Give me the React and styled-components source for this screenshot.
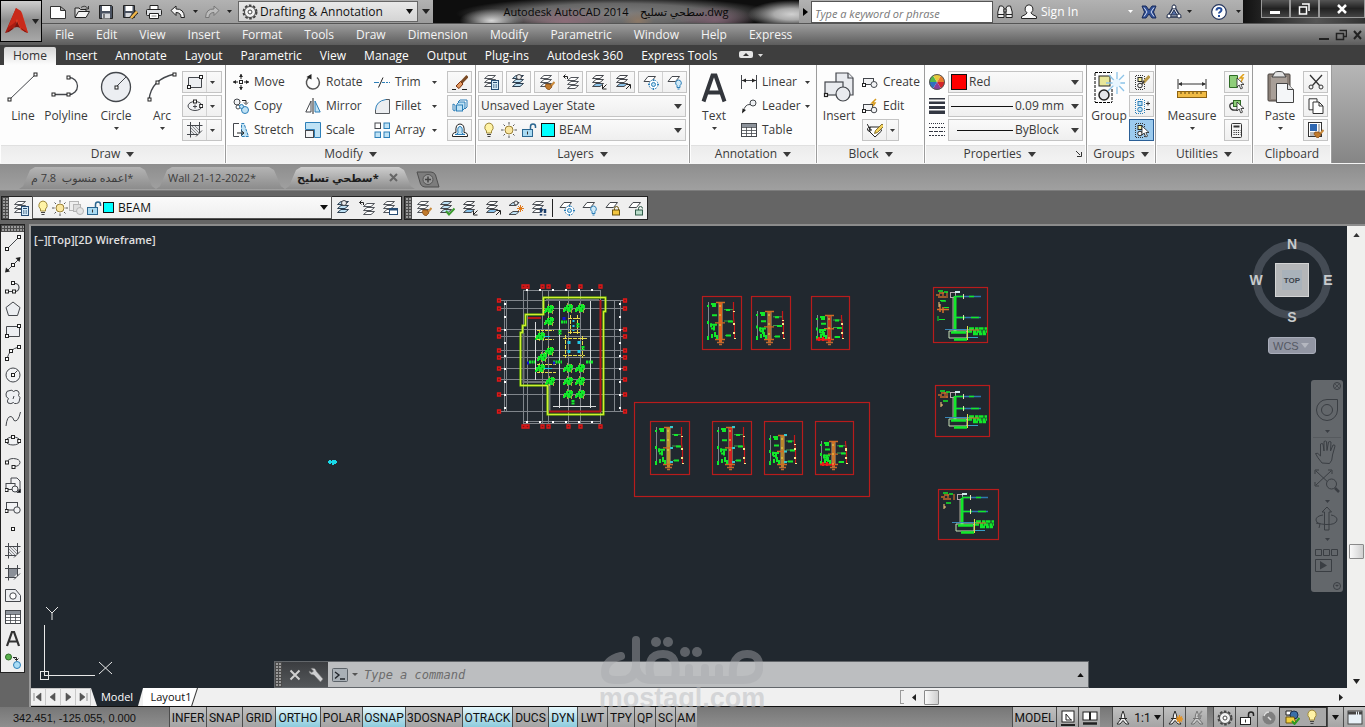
import React, { useState } from 'react';
import styled, { createGlobalStyle } from 'styled-components';

const GlobalStyle = createGlobalStyle`
  * {
    box-sizing: border-box;
  }

  body {
    margin: 0;
    background: #656565;
    font-family: "Open Sans", "Noto Sans", "DejaVu Sans", sans-serif;
    font-size: 12px;
    line-height: 16px;
    color: #3a3a3a;
  }

  button, input, select {
    font: inherit;
    color: inherit;
    margin: 0;
    padding: 0;
    border: 0;
    border-radius: 0;
    background: none;
  }
`;

/* ---------- icons ---------- */

const dark = '#44474c';
const blue = '#2d7fb8';
const pale = '#bfe2f5';

const node = (x, y) => (
  <rect key={ `${x}-${y}` } x={ x - 1.5 } y={ y - 1.5 } width="3" height="3" fill="#fff" stroke="#222" />
);

const sheets = (c = '#50545a', bottom = '#fff', top = '#fff') => (
  <g fill={ top } stroke={ c }>
    <path d="M1.500 12.500L5 9.500H12.500L9 12.500Z" fill={ bottom } />
    <path d="M1.500 8.500L5 5.500H12.500L9 8.500Z" />
    <path d="M1.500 4.500L5 1.500H12.500L9 4.500Z" />
  </g>
);

const sheet = <path d="M1 7.500L5 2.500H12.500L8.500 7.500Z" fill="#fff" stroke={ dark } />;

const bulb = (
  <>
    <path d="M8 1a4.500 4.500 0 0 1 2.500 8v2h-5v-2A4.500 4.500 0 0 1 8 1Z" fill="#fff3a6" stroke="#a08a3c" />
    <path d="M6 12.500h4M6.500 14.500h3" stroke="#444" />
  </>
);

const smallBulb = (
  <>
    <path d="M11.500 6a3 3 0 0 1 1.500 5.500v2h-3v-2A3 3 0 0 1 11.500 6Z" fill="#cfeaf8" stroke={ blue } />
    <path d="M10.500 15h2" stroke={ blue } />
  </>
);

const snow = (
  <g stroke={ blue }>
    <circle cx="10.500" cy="10.500" r="4.500" fill="#fff" strokeDasharray="2 1.500" />
    <circle cx="10.500" cy="10.500" r="2" fill={ pale } />
    <path d="M10.500 5v11M5 10.500h11" strokeDasharray="2 7 2 0" />
  </g>
);

const brush = (
  <>
    <path d="M15.500 8L12 12" stroke="#c98a3c" strokeWidth="2" />
    <path d="M7 10l4 0 2 3-3 3q-3-1-4-4Z" fill="#c07a2c" stroke="#7c4310" strokeWidth=".7" />
  </>
);

const flower = (
  <path
    d="M5 1.500Q7 .5 8.500 2.500Q11 .5 13 2Q15 4 13.500 6.500Q16 8.500 14.500 11Q14.500 14.500 11.500 14.500Q9 15 8.500 13.500Q6 15.500 3 14Q1.500 12 3.500 9.500Q.5 8.500 1 5Q1 1.500 5 1.500ZM9 7L8 10"
    fill="#eef0f3"
    stroke={ dark }
  />
);

const hatch = (
  <>
    <path d="M3 3h10v7l-3 3H3Z" fill="#e6e8ec" />
    <path d="M4 9l3 3M4 6l6 6M5 4l7 7M8 4l4 4" stroke="#777" strokeWidth=".8" />
    <path d="M3.500 0v15.500M12.500 0v11M0 3.500h15.500M0 12.500h11M9 14.500l6-6" stroke={ dark } />
  </>
);

const aMan = (
  <g fill="#f3f3f3" stroke="#2a2a2a">
    <path d="M8 1L9.500 5 10 9 14 14H11L8 10.500 5 14H2L6 9 6.500 5Z" />
    <path d="M4 8.500h8" />
  </g>
);

const openLock = (fill, c) => (
  <>
    <path d="M9.500 8V4.500a2.500 2.500 0 0 1 5 0V6" stroke={ c } strokeWidth="1.500" />
    <rect x="1.500" y="7.500" width="10" height="7" fill={ fill } stroke={ c } />
    <path d="M6.500 9.500v3" stroke="#333" />
  </>
);

const lockOver = (fill, c, open) => (
  <>
    { sheet }
    <path d={ open ? 'M10.500 10V8.500a2 2 0 0 1 4 0' : 'M9.500 10V8.500a2 2 0 0 1 4 0V10' } stroke={ c } />
    <rect x="7.500" y="10" width="7" height="5" fill={ fill } stroke={ c } />
  </>
);

const cursor = <path d="M8 4v9l2.200-2 1.600 4 1.700-.8-1.600-3.700H15Z" fill="#fff" stroke="#222" strokeWidth=".8" />;

const groupMarks = (
  <>
    <path d="M1.500 2v13M10.500 2v13M2 1.500h8M2 15.500h8" stroke="#333" strokeDasharray="1 1" />
    <rect x="4" y="3.500" width="4" height="4" fill="#f5f0a0" stroke="#222" />
    <circle cx="6" cy="11.500" r="2.300" fill="#eee" stroke="#222" />
  </>
);

const glyphs = {
  // quick access
  newFile: <path d="M.5 2.500h10l5 4v8H.5ZM10.500 2.500v4h5" fill="#fff" stroke="#333" />,
  open: (
    <>
      <path d="M1 13V4h4l1.500 1.500H12V7" fill="#ddd" stroke="#222" />
      <path d="M1 13.500L4.500 7.500H15.500L12 13.500Z" fill="#f4f4f4" stroke="#222" />
      <path d="M7 3.500q4-3 7 1M14.500 2v3h-3" stroke="#222" strokeWidth=".8" />
    </>
  ),
  save: (
    <>
      <path d="M1.500 1.500h12l1 1v12h-13Z" fill="#4a5261" stroke="#222" />
      <rect x="4" y="2" width="8" height="5" fill="#fff" />
      <rect x="4" y="9.500" width="8" height="5" fill="#d6d8dc" />
      <path d="M6 10v4" stroke="#222" />
    </>
  ),
  saveAs: (
    <>
      <path d="M1.500 1.500h11v12h-11Z" fill="#4a5261" stroke="#222" />
      <rect x="3.500" y="2" width="7" height="5" fill="#fff" />
      <rect x="3.500" y="9" width="6" height="4" fill="#d6d8dc" />
      <path d="M15 7.500L9 14" stroke="#222" strokeWidth="4" />
      <path d="M15 7.500L9 14" stroke="#f0b64a" strokeWidth="2.500" />
    </>
  ),
  print: (
    <>
      <path d="M4 6V1.500h8V6" fill="#fff" stroke="#222" />
      <rect x=".5" y="5.500" width="15" height="6" rx="1" fill="#dfe1e4" stroke="#222" />
      <path d="M3.500 9.500h9v5h-9Z" fill="#fff" stroke="#222" />
      <path d="M5.500 12h5" stroke="#888" />
    </>
  ),
  undo: <path d="M1 6.500L6 2v3q8-.5 8.500 8.500H11Q11 8.500 6 8.500v3Z" fill="#f4f4f4" stroke="#222" />,
  redo: <path d="M15 6.500L10 2v3q-8-.5-8.500 8.500H5Q5 8.500 10 8.500v3Z" fill="#bcbcbc" stroke="#777" />,
  gear: (
    <>
      <circle cx="8" cy="8" r="6.500" stroke="#444" strokeWidth="2" strokeDasharray="2.600 1.500" />
      <circle cx="8" cy="8" r="5.500" fill="#f2f2f2" stroke="#444" />
      <circle cx="8" cy="8" r="2" fill="#fff" stroke="#444" />
    </>
  ),
  binoculars: (
    <g fill="#eee" stroke="#222">
      <path d="M2.500 2h3l1.500 2v9.500H.8V8ZM13.500 2h-3L9 4v9.500h6.200V8Z" />
      <path d="M7 5h2v3H7ZM1 10.500h6M9 10.500h6" />
    </g>
  ),
  person: (
    <path d="M8 .8a4 4.300 0 0 1 2 8q0 1.500 5.500 3.700v2H.5v-2Q6 10.300 6 8.800a4 4.300 0 0 1 2-8Z" fill="#fbfbfb" stroke="#222" />
  ),
  exchange: (
    <g strokeWidth="1">
      <path d="M1 2h4l3 4 3-4h4l-2.500 6 2.500 6h-4l-3-4-3 4H1l2.500-6Z" fill="#2f4f96" stroke="#1b2c5c" />
      <path d="M3 3.500L6 8 3 12.500M13 3.500L10 8l3 4.500" stroke="#d7def0" />
    </g>
  ),
  triangleA: (
    <>
      <path d="M8 1.500L14.500 13H1.500Z" fill="#dfe4ee" stroke="#26324f" strokeWidth="1.500" />
      <path d="M8 6l3 5H5Z" fill="#5770a8" stroke="#26324f" />
      <g fill="#fff" stroke="#26324f">
        <circle cx="8" cy="3" r="2" /><circle cx="3" cy="12" r="2" /><circle cx="13" cy="12" r="2" />
      </g>
    </>
  ),
  help: (
    <>
      <circle cx="8" cy="8" r="7.300" fill="#fff" stroke="#24345c" strokeWidth="1.200" />
      <path d="M5.500 6.500q0-2.500 2.500-2.500t2.500 2q0 1.200-1.500 2-1 .6-1 1.500M8 11v2" stroke="#274f9c" strokeWidth="2" />
    </>
  ),
  // draw
  line: <><path d="M2 14L14 2" stroke={ dark } />{ node(2, 14) }{ node(14, 2) }</>,
  xline: <><path d="M2 14L14 2" stroke={ dark } /><path d="M0 15.500l1-5 4 4ZM15.500 0l-5 1 4 4Z" fill="#222" />{ node(8, 8) }</>,
  pline: <><path d="M2 12.500h7a4 4 0 1 0 0-8H8" stroke="none" /><path d="M2 12.500h8a4 4 0 0 0 0-8H8" stroke={ dark } strokeWidth="1.200" />{ node(2, 12.5) }{ node(9, 12.5) }{ node(8, 4) }</>,
  polygon: <path d="M8 1l7 5.500-2.500 8h-9L1 6.500Z" fill="#eceef1" stroke={ dark } />,
  rect: <><path d="M1.500 3.500h13v10h-13Z" fill="#eceef1" stroke={ dark } />{ node(2, 13) }{ node(14, 3) }</>,
  arc: <><path d="M2 14Q4 4 14 2" stroke={ dark } />{ node(2, 14) }{ node(6, 6) }{ node(14, 2) }</>,
  circle: <><circle cx="8" cy="8" r="7" fill="#f2f3f5" stroke={ dark } /><path d="M8 8l4.500-4.500" stroke={ dark } />{ node(8, 8) }</>,
  cloud: flower,
  spline: <path d="M1 15Q2 5 6 5.500Q8 6 9 9.500Q13 12 15.500 1" stroke={ dark } />,
  ellipse: <><ellipse cx="8" cy="8" rx="7" ry="4" fill="#f2f3f5" stroke={ dark } />{ node(8, 4) }{ node(1.8, 8) }{ node(14.2, 8) }</>,
  ellipseC: <><ellipse cx="8" cy="8" rx="7" ry="4.500" fill="#f2f3f5" stroke={ dark } />{ node(8, 3.5) }{ node(14.2, 8) }<path d="M6 8.500h4M8 6.500v4" stroke={ dark } /></>,
  ellipseArc: <><path d="M2 7.500Q3 3.500 8.500 3.500Q15 4 15 7.500Q14.500 11.500 8.500 11.500" stroke={ dark } />{ node(2, 7.5) }{ node(8.5, 12) }</>,
  insertBlock: (
    <g fill="#f2f3f5" stroke={ dark }>
      <path d="M6 1h6l3 3v9H9V8H6Z" /><rect x="1" y="6.500" width="9" height="6" /><circle cx="10" cy="12" r="3" />
      { node(1.5, 13) }<path d="M15.500 12v3.500H12Z" fill="#000" />
    </g>
  ),
  makeBlock: <g fill="#f2f3f5" stroke={ dark }><rect x="1.500" y="3.500" width="11" height="7.500" /><circle cx="12" cy="11" r="3.200" />{ node(1.5, 12) }</g>,
  point: node(8, 8),
  hatch,
  gradient: (
    <>
      <path d="M4 4h8v5l-3 3H4Z" fill="#8b9098" />
      <path d="M3.500 0v15.500M12.500 0v11M0 3.500h15.500M0 12.500h11M9 14.500l6-6" stroke={ dark } />
    </>
  ),
  region: <><path d="M.5 2.500h10l5 6v6H.5Z" fill="#eceef1" stroke={ dark } /><circle cx="8" cy="9" r="3.200" fill="#fff" stroke={ dark } /></>,
  table: (
    <>
      <rect x=".5" y="1.500" width="15" height="13" fill="#fff" stroke={ dark } />
      <path d="M1 2h14v3H1Z" fill="#8d939b" />
      <path d="M.5 5.500h15M.5 8.500h15M.5 11.500h15M5.500 5v9M10.500 5v9" stroke={ dark } strokeWidth=".8" />
    </>
  ),
  bigA: <path d="M2 15L7 1h2l5 14M4 10.500h8" stroke="#333" strokeWidth="2.200" />,
  addSelected: (
    <>
      <circle cx="3.500" cy="4" r="3" fill="#58b04c" stroke="#2c6b25" />
      <circle cx="12" cy="12" r="3.500" fill="#aadcf5" stroke={ blue } />
      <path d="M8 4.500h3.500V7M9.500 5.500l2 2 2-2" stroke="#222" />
    </>
  ),
  // modify
  move: (
    <>
      <path d="M8 0v5M8 11v5M0 8h5M11 8h5" stroke="#222" />
      <path d="M8 0l-2 3h4ZM8 16l-2-3h4ZM0 8l3-2v4ZM16 8l-3-2v4Z" fill="#222" />
      { node(8, 8) }
    </>
  ),
  rotate: (
    <>
      <path d="M4.500 3a6.500 6.500 0 1 0 7.500.5" stroke="#555" strokeWidth="1.500" />
      <path d="M6.500 0v5.500L1.500 3Z" fill="#222" />
    </>
  ),
  trim: (
    <>
      <path d="M0 8.500h5M8 8.500h3M12 8.500h2M15 8.500h1" stroke={ blue } strokeWidth="1.200" />
      <path d="M4.500 13.500L9 3.500" stroke="#222" />
    </>
  ),
  copy: (
    <>
      <circle cx="4" cy="4" r="3" fill="#f2f3f5" stroke={ dark } />
      <circle cx="5" cy="9" r="2" fill="#fff" stroke={ dark } />
      <circle cx="12" cy="12" r="3.500" fill={ pale } stroke={ blue } />
      <circle cx="8.500" cy="8.500" r="2" fill={ pale } stroke={ blue } />
      <path d="M9 2.500h4V5M11 4.500l2 2 2-2" stroke="#222" />
    </>
  ),
  mirror: (
    <>
      <path d="M6 3v11H.8Z" fill="#fff" stroke={ dark } />
      <path d="M10 3v11h5.200Z" fill={ pale } stroke={ blue } />
      <path d="M8 0v16" stroke="#222" />
    </>
  ),
  fillet: (
    <>
      <path d="M2 15V13Q2 2 14 2h1v13Z" fill="#eceef1" />
      <path d="M1.500 12Q2 3 12 1.500" stroke={ blue } />
      <path d="M1.500 12v3.500M12 1.500h3.500v14M1.500 15.500h14" stroke={ dark } strokeWidth=".9" />
    </>
  ),
  stretch: (
    <>
      <path d="M6 1.500H.5v13H6" stroke={ dark } />
      <path d="M8.500 1.500H11L15.500 14.500H8.500Z" fill={ pale } stroke={ blue } strokeDasharray="3 1" />
      <path d="M4 11h6M8 8.500l3 2.500-3 2.500" stroke="#222" />
    </>
  ),
  scale: (
    <>
      <path d="M.5 .5h15v15h-6V7.500H.5Z" fill={ pale } stroke={ blue } />
      <rect x=".5" y="8.500" width="8" height="7" fill="#f2f3f5" stroke={ dark } />
    </>
  ),
  array: (
    <g fill={ pale } stroke={ blue }>
      <rect x="1" y="1" width="5.500" height="5.500" fill="#fff" stroke={ dark } />
      <rect x="10" y="1" width="5.500" height="5.500" /><rect x="1" y="10" width="5.500" height="5.500" /><rect x="10" y="10" width="5.500" height="5.500" />
    </g>
  ),
  erase: (
    <>
      <path d="M0 15.500h4M10 15.500h5" stroke="#222" />
      <path d="M15.500 2L8 10" stroke="#7a4a24" strokeWidth="3" />
      <path d="M8.500 7.500l2.500 2.500-4 4.500-3-2.500Z" fill="#e59a60" stroke="#7a3210" />
    </>
  ),
  explode: (
    <g fill={ pale } stroke={ blue }>
      <path d="M6 4l2-2h7v7l-2 2" fill="#fff" /><path d="M5 6l2-2h6v6l-2 2" /><rect x="4.500" y="7" width="6" height="6" />
      <path d="M1 6v6l2 1V7Z" fill="#fff" />
    </g>
  ),
  offset: (
    <>
      <path d="M.5 14.500q-.5-4 3.500-4Q3 2 8 2t4 8.500q4 0 3.500 4Z" stroke="#222" fill="#fff" />
      <path d="M3 12.500q3 0 3-2Q5 4.500 8 4.500t2 6q0 2 3 2Z" fill={ pale } stroke={ blue } />
    </>
  ),
  // layers
  layerProps: <>{ sheets() }<rect x="8.500" y="6.500" width="7" height="9" fill="#d5ebf8" stroke="#264c74" /><path d="M10 8.500h4" stroke="#264c74" /><path d="M10 11h4M10 13h4" stroke="#264c74" strokeDasharray="1 .5" /></>,
  layerCurrent: <>{ sheets('#2c3e50', pale, pale) }<circle cx="8" cy="3" r="2.500" fill="#eee" stroke={ dark } /></>,
  layerMatch: <>{ sheets() }{ brush }</>,
  layerPrev: <g transform="translate(3 2)">{ sheets() }<path d="M-2.500.5h4V3M-.5-1.500l-2 2 2 2" stroke="#222" /></g>,
  layerIso: <>{ sheets(dark, '#8ac4ec') }<path d="M15.500 10.500l-4 4M11.500 11v4h4" stroke="#222" /></>,
  layerUniso: <>{ sheets(dark, '#8ac4ec') }<path d="M11 15l4-4M11.500 10.500h4v4" stroke="#222" /></>,
  layerFreeze: <>{ sheet }{ snow }</>,
  layerOff: <>{ sheet }{ smallBulb }</>,
  layerLock: lockOver('#f3c63f', '#6b5410', false),
  layerUnlock: lockOver('#b9dcc9', '#2f5a48', true),
  layerStates: <>{ sheets() }<rect x="7.500" y="8.500" width="8" height="6" fill="#fff" stroke="#264c74" /><path d="M8 9.500h7" stroke="#264c74" strokeWidth="2" /></>,
  layerCheck: <>{ sheets(dark, pale, pale) }<path d="M7 11l3 3.500 5.500-6" stroke="#3a9a2e" strokeWidth="2" /></>,
  layerMerge: <><path d="M1 5.500L5 2.500h6L8 5.500ZM1 14.500l4-3h6l-3 3Z" fill={ pale } stroke={ dark } /><circle cx="8" cy="3" r="2" fill="#eee" stroke={ dark } /><path d="M12.500 5v7M9 8.500h7M10 6l5 5M15 6l-5 5" stroke="#e07a1c" /></>,
  layerWalk: <>{ sheets() }<path d="M10 8v4.500M10 14v1.500M14 9v4M14 14.500v1" stroke="#1c3f6c" strokeWidth="2.500" /></>,
  bulb,
  smallBulb,
  sun: (
    <g stroke="#444">
      <path d="M8 0v16M0 8h16M2.500 2.500l11 11M13.500 2.500l-11 11" strokeWidth=".9" />
      <circle cx="8" cy="8" r="5.500" fill="#f8f8f8" stroke="none" />
      <circle cx="8" cy="8" r="4" fill="#fbe7a0" stroke="#9a8138" />
    </g>
  ),
  vpFreeze: <><rect x=".5" y="1.500" width="9" height="9" fill="#eee" stroke="#b5b5b5" /><rect x="4.500" y="4.500" width="7" height="7" fill="#ddd" stroke="#b5b5b5" /><circle cx="11" cy="11" r="3.500" fill="#e6e6e6" stroke="#b5b5b5" /></>,
  unlocked: openLock('#a9daf2', '#2a6690'),
  // annotation, block
  linear: <><path d="M.5 1v14M15.500 1v14M1 6.500h14" stroke={ dark } /><path d="M1 6.500l4-2v4ZM15 6.500l-4-2v4Z" fill="#222" /></>,
  leader: <><path d="M2 14Q4 6 9 6.500" stroke={ dark } /><path d="M1 15.500l.5-5 3.500 1.500Z" fill="#222" /><circle cx="12" cy="5" r="3" fill="#eef0f3" stroke={ dark } /></>,
  createBlock: <g fill="#f2f3f5" stroke={ dark }><rect x="1.500" y="4.500" width="10" height="6" /><circle cx="12" cy="10.500" r="3" />{ node(2, 11) }</g>,
  editBlock: <g fill="#f2f3f5" stroke={ dark }><rect x="1.500" y="6.500" width="9" height="6" /><circle cx="12" cy="12" r="2.800" />{ node(2, 13) }<path d="M14 1l-4 4h3l-2 3" stroke="#d79a1c" strokeWidth="1.500" /></g>,
  attrib: (
    <>
      <path d="M3 5h10l1.500 4-6.500 6L2 9Z" fill="#fff" stroke="#222" />
      <path d="M0 2l4 6M3.500 5.500a2 2 0 1 0 1 2" stroke="#222" />
      <path d="M15 2L8.500 8.500 7.500 11.500l3-1L17 4Z" fill="#f4d35e" stroke="#6b5410" strokeWidth=".8" />
    </>
  ),
  wheel: (
    <>
      <path d="M8 8L.5 8A7.500 7.500 0 0 1 4 1.500Z" fill="#53b848" /><path d="M8 8L4 1.500A7.500 7.500 0 0 1 12 1.500Z" fill="#e8c93a" />
      <path d="M8 8L12 1.500A7.500 7.500 0 0 1 15.500 8Z" fill="#e87b2c" /><path d="M8 8L15.500 8A7.500 7.500 0 0 1 12 14.500Z" fill="#d4262b" />
      <path d="M8 8L12 14.500A7.500 7.500 0 0 1 4 14.500Z" fill="#8a3d97" /><path d="M8 8L4 14.500A7.500 7.500 0 0 1 .5 8Z" fill="#2e6fc0" />
      <circle cx="8" cy="8" r="7.500" stroke="#555" />
    </>
  ),
  lweight: <path d="M0 0h16v1.500H0ZM0 3.500h16v2.500H0ZM0 8h16v3H0ZM0 12.500h16v3.500H0Z" fill="#333742" />,
  ltype: <g stroke="#333742"><path d="M0 1.500h16" strokeDasharray="1 1" /><path d="M0 5.500h16M0 13.500h16" strokeDasharray="2 1" /><path d="M0 9.500h16" strokeDasharray="4 1" /></g>,
  // groups, utilities, clipboard
  ungroup: <>{ groupMarks }<path d="M15.500 2L9 9" stroke="#b99a4a" strokeWidth="3" /><path d="M8 10l2-3" stroke="#444" strokeWidth="2" /></>,
  groupEdit: <g stroke={ blue }><path d="M1.500 2v13M10.500 2v13M2 1.500h8M2 15.500h8" strokeDasharray="1 1" /><rect x="4" y="3.500" width="4" height="4" fill={ pale } /><circle cx="6" cy="11.500" r="2.300" fill={ pale } /><path d="M12 5.500h4M14 3.500v4M12 11.500h4" stroke="#333" /></g>,
  groupSelect: <>{ groupMarks }{ cursor }</>,
  quickSelect: <><path d="M.5 1.500h8v12h-8Z" fill="#8fce7a" stroke="#2f6b25" /><path d="M15 0l-4 4h3l-2 4" stroke="#e0a018" strokeWidth="1.500" />{ cursor }</>,
  selectSimilar: <><path d="M5 5Q0 5 1 9t7 3" stroke="#333" strokeWidth="1.300" /><rect x="4.500" y="2.500" width="7" height="6" fill="#8fce7a" stroke="#2f6b25" />{ cursor }</>,
  calc: <><rect x="2.500" y="1.500" width="10" height="14" rx="1" fill="#f4f4f4" stroke="#333" /><path d="M4.500 4.500h6" stroke="#333" strokeWidth="2" /><path d="M4.500 8.500h7M4.500 10.500h7M4.500 12.500h7" stroke="#333" strokeDasharray="1.200 1" /></>,
  cut: <g stroke="#333"><path d="M2 1l9.500 10.500M14 1L4.500 11.500" strokeWidth="1.300" /><circle cx="3" cy="13" r="2" /><circle cx="13" cy="13" r="2" /></g>,
  copyClip: <g fill="#fff" stroke="#333"><path d="M1 .8h8v11H1Z" /><path d="M5 4h6l4 4v7.500H5ZM11 4v4h4" /></g>,
  matchProp: <><rect x=".5" y=".5" width="13" height="14" fill="#fff" stroke="#333" /><rect x="2" y="2" width="7" height="7" fill="#2e67b1" /><path d="M11 2v8M2 11h6M2 13h4" stroke="#777" />{ brush }</>,
  // status
  modelSpace: <><rect x="2" y="1" width="12" height="11" fill="#fff" stroke="#222" /><path d="M6 4v6h6" stroke="#222" /><path d="M6 4l5 6" stroke="#222" /><path d="M1 15h14" stroke="#222" strokeWidth="2" /></>,
  quickView: <><rect x="1" y="2" width="6.500" height="8" fill="#fff" stroke="#222" /><rect x="8.500" y="2" width="6.500" height="8" fill="#fff" stroke="#222" /><path d="M1 13.500h14" stroke="#222" strokeWidth="2.500" /></>,
  annoScale: aMan,
  annoVis: <>{ aMan }<path d="M12.500 5v8M9 9h7M10 6.500l5 5M15 6.500l-5 5" stroke="#e8921c" strokeWidth="1.300" /></>,
  annoAuto: <g opacity=".45">{ aMan }<path d="M13 1L9 6h3l-2 4" stroke="#555" strokeWidth="1.500" /></g>,
  statusLock: openLock('#fff', '#222'),
  hardware: <><circle cx="8" cy="8" r="6.500" fill="#7f7f7f" /><path d="M3 6a5.500 5.500 0 0 1 5-4M7 7l3 3" stroke="#ddd" strokeWidth="1.500" /></>,
  isolate: <><path d="M2 2h6v4H2Z" fill="#fff" stroke="#222" /><circle cx="10" cy="6" r="4" fill="#3a6ea8" stroke="#1b2f50" /><path d="M2 8l8 0 2 6H2Z" fill="#f2cf3d" stroke="#6b5410" /><path d="M8 12l2.500 3L15.500 9" stroke="#2d9a22" strokeWidth="2" /></>,
  cleanScreen: <><rect x="1" y="1" width="14" height="13" fill="#e8f1f8" stroke="#444" /><path d="M1 3h14" stroke="#444" strokeWidth="3" strokeDasharray="8 1 1 1" /></>,
  // command line
  wrench: <path d="M3 1.500Q7 0 8.500 4.500L15 12l-2.500 3L6 8Q1.500 8 1 4l3 1.500L5.500 4Z" fill="#cfd0d2" stroke="#777" strokeWidth=".6" />,
  prompt: <><rect x=".5" y="1.500" width="15" height="13" rx="1" fill="#a9b0b6" stroke="#5c6369" /><path d="M3 5l4 3-4 3.500M8 12h5" stroke="#22262b" strokeWidth="1.400" /></>,
  cross: <path d="M3.500 3.500l9 9M12.500 3.500l-9 9" stroke="currentColor" strokeWidth="2" />,
};

const Svg = styled.svg`
  display: block;
  flex: none;
  fill: none;
`;

const Icon = ({ name, size = 16 }) => (
  <Svg width={ size } height={ size } viewBox="0 0 16 16" aria-hidden="true">{ glyphs[name] }</Svg>
);

const bigGlyphs = {
  Line: <><path d="M2 29L29 3" stroke={ dark } />{ node(2.5, 28.5) }{ node(28.5, 3.5) }</>,
  Polyline: <><path d="M3 23.500h16a8.500 8.500 0 0 0 0-17h-1" stroke={ dark } strokeWidth="1.300" />{ node(3.5, 23.5) }{ node(18.5, 23.5) }{ node(18.5, 6.5) }</>,
  Circle: <><circle cx="16" cy="16" r="14.500" fill="#eceef2" stroke={ dark } strokeWidth="1.300" /><path d="M16 16L26 6" stroke={ dark } />{ node(16.5, 16.5) }</>,
  Arc: <><path d="M3 29Q5 8 29 3" stroke={ dark } strokeWidth="1.300" />{ node(3.5, 28.5) }{ node(11.5, 11.5) }{ node(28.5, 3.5) }</>,
  Text: <path d="M5.500 30.500L14.500 4.500h3L26.500 30.500M9 21.500h14" stroke="#33363c" strokeWidth="4" />,
  Insert: (
    <g fill="#e9ebef" stroke={ dark } strokeWidth="1.200">
      <path d="M13 2h12l5 5v17H18V12h-5Z" /><path d="M25 2v5h5" /><rect x="2" y="11" width="18" height="13" />
      <circle cx="20" cy="23" r="7" />{ node(3, 24) }
    </g>
  ),
  Group: (
    <>
      <path d="M2 1.500h17M2 31.500h17M2 2v29M19 18v13" stroke="#000" strokeDasharray="3 1" />
      <rect x="6" y="5" width="11" height="10" fill="#e8e79a" stroke="#222" />
      <circle cx="11" cy="24" r="5" fill="#e3e5e9" stroke="#222" strokeWidth="1.500" />
      <path d="M24 1v22M13 12h19M16 4l15 16M31 4L15 20" stroke="#8cc3e8" strokeWidth="1.300" />
      <circle cx="23.500" cy="12" r="4" fill="#e8f6ff" />
    </>
  ),
  Measure: (
    <>
      <path d="M2 8v10M30 8v10M3 13h26" stroke="#333" />
      <path d="M2 13l4-2v4ZM30 13l-4-2v4Z" fill="#333" />
      <rect x="1.500" y="20.500" width="29" height="6" fill="#f0bb45" stroke="#8c6212" />
      <path d="M5 21v2M9 21v2M13 21v2M17 21v2M21 21v2M25 21v2" stroke="#5c400c" />
    </>
  ),
  Paste: (
    <>
      <rect x="4" y="3" width="22" height="27" rx="1" fill="#8b8078" stroke="#4a4440" />
      <rect x="7" y="6" width="16" height="22" fill="#a89f98" />
      <path d="M10 3q0-2.500 5-2.500T20 3l2 3H8Z" fill="#e3e3e3" stroke="#444" />
      <path d="M12.500 12.500h11l6 6v13h-17Z" fill="#f4f6f8" stroke="#444" /><path d="M23.500 12.500v6h6" fill="#ddd" stroke="#444" />
    </>
  ),
};

const Caret = ({ w = 5 }) => (
  <Svg width={ w } height={ w > 6 ? 5 : 3 } viewBox="0 0 8 5" preserveAspectRatio="none" aria-hidden="true">
    <path d="M0 0h8L4 5Z" fill="currentColor" />
  </Svg>
);

/* ---------- title bar and menus ---------- */

const Page = styled.div`
  display: flex;
  flex-direction: column;
  height: 100vh;
  min-height: 600px;
  overflow: hidden;
`;

const Header = styled.header`
  display: grid;
  grid-template-columns: 42px minmax(0, 1fr);
  grid-template-rows: 25px 20px;
  background: linear-gradient(#a6a6a6 0, #a6a6a6 24px, #969696 25px, #5a5a5a 100%);
`;

const AppButton = styled.button`
  grid-row: 1 / 3;
  height: 42px;
  display: flex;
  align-items: center;
  justify-content: center;
  gap: 2px;
  border: 1px solid #000;
  color: #222;
  background: linear-gradient(#cfcfcf, #8a8a8a 50%, #a8a8a8);
`;

const TitleBar = styled.div`
  display: flex;
  align-items: stretch;
  height: 24px;
  min-width: 0;
  background: linear-gradient(#b2b2b2, #9c9c9c);
  border-bottom: 1px solid #555;
`;

const Tools = styled.div`
  display: flex;
  align-items: center;
  color: #222;
  gap: ${props => props.$gap || 0}px;
  padding: 0 ${props => props.$pad || 0}px;
`;

const ToolButton = styled.button`
  display: flex;
  align-items: center;
  justify-content: center;
  flex: none;
  width: ${props => props.$w || 24}px;
  height: 20px;
`;

const Workspace = styled.label`
  display: flex;
  align-items: center;
  gap: 2px;
  width: 180px;
  height: 21px;
  padding: 0 4px 0 3px;
  border: 1px solid #666;
  color: #111;
  background: linear-gradient(#e9e9e9, #d4d4d4);
`;

const BareSelect = styled.select`
  appearance: none;
  flex: 1;
  min-width: 0;
  height: 100%;
  outline: none;
`;

const Glass = styled.div`
  flex: 1;
  min-width: 0;
  display: flex;
  align-items: center;
  justify-content: center;
  color: #080808;
  font-size: 11px;
  white-space: pre;
  background:
    radial-gradient(ellipse 32px 12px at 16% 90%, #d8d8d8, transparent),
    radial-gradient(ellipse 44px 14px at 98% 62%, #d0d0d0, #aaa 40%, transparent),
    radial-gradient(ellipse 50px 14px at 36% 90%, #8c6c78, transparent),
    radial-gradient(ellipse 40px 14px at 77% 85%, #7c6070, transparent),
    radial-gradient(ellipse 16px 10px at 56% 90%, #8c7866, transparent),
    radial-gradient(ellipse 160px 17px at 50% 60%, #808080, #666 60%, transparent),
    #0e0e0e;
`;

const Search = styled.input`
  width: 182px;
  height: 22px;
  padding: 4px 3px 0;
  border: 1px solid #555;
  font-style: italic;
  font-size: 11px;
  background: #fff;

  &::placeholder {
    color: #777;
    opacity: 1;
  }
`;

const SignIn = styled.button`
  display: flex;
  align-items: center;
  justify-content: space-between;
  width: 92px;
  color: #fff;
  text-align: left;
`;

const WindowButtons = styled.div`
  display: flex;
  align-items: flex-start;
  width: 122px;
  padding-left: 18px;
  background: linear-gradient(90deg, #111, #555 60%, #333);
`;

const WindowButton = styled.button`
  display: flex;
  align-items: center;
  justify-content: center;
  flex: ${props => props.$wide ? 46 : 28};
  height: 18px;
  color: #fff;
  border: 1px solid #999;
  border-top: 0;
  background: linear-gradient(#555, #222 50%, #444);
`;

const MenuBar = styled.nav`
  display: flex;
  align-items: center;
  justify-content: space-between;
  padding-left: 2px;
  background: linear-gradient(#9a9a9a, #5c5c5c);
`;

const MenuItem = styled.button`
  height: 20px;
  padding: 0 11px;
  color: #f4f4f4;
`;

const RibbonTabs = styled.nav`
  display: flex;
  align-items: flex-end;
  height: 20px;
  padding-left: 4px;
  background: #3e3e3e;
`;

const RibbonTab = styled.button`
  height: 18px;
  padding: 0 9px;
  color: ${props => props.$active ? '#333' : '#fff'};
  background: ${props => props.$active ? 'linear-gradient(#d5d5d5, #fdfdfd)' : 'none'};
  border-radius: 2px 2px 0 0;
`;

/* ---------- ribbon ---------- */

const Ribbon = styled.div`
  display: flex;
  height: 99px;
  border-bottom: 1px solid #f4f4f4;
  background: linear-gradient(#b6b6b6, #858585);
`;

const Panel = styled.section`
  display: flex;
  flex-direction: column;
  flex: none;
  width: ${props => props.$w}px;
  border-right: 1px solid #9c9c9c;
  background: #fdfdfd;
`;

const PanelBody = styled.div`
  display: flex;
  flex: 1;
  gap: ${props => props.$gap || 0}px;
  padding: 6px 3px 0 ${props => props.$left || 4}px;
`;

const PanelTitle = styled.button`
  display: flex;
  align-items: center;
  justify-content: center;
  gap: 6px;
  height: 18px;
  margin: 0 1px;
  padding: 0 3px 1px;
  background: linear-gradient(#ececec, #f3f3f3);
  border-top: 1px solid #e0e0e0;
`;

const BigButton = styled.button`
  display: flex;
  flex-direction: column;
  align-items: center;
  flex: none;
  width: ${props => props.$w}px;
  height: 66px;
  gap: 3px;
  white-space: nowrap;
`;

const Col = styled.div`
  display: flex;
  flex-direction: column;
  align-items: ${props => props.$end ? 'flex-end' : 'stretch'};
  flex: ${props => props.$w ? 'none' : 1};
  gap: 2px;
  min-width: 0;
  width: ${props => props.$w ? `${props.$w}px` : 'auto'};
`;

const Row = styled.div`
  display: flex;
  align-items: center;
  gap: ${props => props.$gap || 0}px;
  height: 22px;
`;

const TextButton = styled.button`
  display: flex;
  align-items: center;
  flex: 1;
  gap: 5px;
  height: 22px;
  min-width: 0;
  white-space: nowrap;
`;

const CaretButton = styled.button`
  display: flex;
  align-items: center;
  justify-content: center;
  width: 12px;
  height: 22px;
`;

const Boxed = styled.div`
  display: flex;
  flex: none;
  height: 22px;
  border: 1px solid ${props => props.$on ? '#2b5f96' : '#c4c4c4'};
  background: ${props => props.$on ? '#9ccbee' : 'linear-gradient(#fafafa, #f0f0f0)'};

  button {
    display: flex;
    align-items: center;
    justify-content: center;
    width: 23px;
    height: 20px;
  }

  button + button {
    width: ${props => props.$split ? 12 : 24}px;
    border-left: 1px solid #d2d2d2;
  }
`;

const Combo = styled.label`
  display: flex;
  align-items: center;
  flex: 1;
  gap: ${props => props.$gap || 0}px;
  height: 22px;
  min-width: 0;
  padding: 0 3px 0 ${props => props.$left || 2}px;
  border: 1px solid #c4c4c4;
  background: linear-gradient(#fafafa, #efefef);
`;

const Swatch = styled.span`
  flex: none;
  width: ${props => props.$size || 14}px;
  height: ${props => props.$size || 14}px;
  border: 1px solid #111;
  background: ${props => props.$color};
`;

const LineSample = styled.span`
  flex: 1;
  height: 1px;
  min-width: 0;
  background: #111;
`;

const FixedSelect = styled(BareSelect)`
  flex: none;
  width: ${props => props.$w}px;
`;

/* ---------- file tabs and toolbars ---------- */

const FileTabs = styled.nav`
  display: flex;
  align-items: flex-end;
  height: 27px;
  padding: 0 0 1px 19px;
  background: linear-gradient(#8e8e8e, #a0a0a0);
  border-bottom: 1px solid #7c7c7c;
`;

const tabShape = 'polygon(0 100%, 4px 88%, 11px 14%, 16px 0, calc(100% - 16px) 0, calc(100% - 11px) 14%, calc(100% - 4px) 88%, 100% 100%)';

const FileTab = styled.button`
  display: flex;
  align-items: center;
  justify-content: space-between;
  flex: none;
  width: ${props => props.$w}px;
  height: 22px;
  padding: 0 16px 0 12px;
  white-space: pre;
  font-size: 11px;
  font-weight: ${props => props.$active ? 'bold' : 'normal'};
  color: ${props => props.$active ? '#1c1c1c' : '#3c3c3c'};
  clip-path: ${tabShape};
  background: ${props => props.$active ? 'linear-gradient(#cdcdcd, #8e8e8e)' : 'linear-gradient(#b4b4b4, #8c8c8c)'};
`;

const ToolbarRow = styled.div`
  display: flex;
  align-items: center;
  gap: 2px;
  height: 33px;
  padding-left: 1px;
  background: #656565;
`;

const Toolbar = styled.div`
  display: flex;
  align-items: center;
  height: 24px;
  border: 1px solid #222;
  background: #efefef;
`;

const Grip = styled.span`
  flex: none;
  align-self: stretch;
  width: ${props => props.$flat ? 'auto' : '7px'};
  height: ${props => props.$flat ? '7px' : 'auto'};
  background: radial-gradient(circle at 1px 1px, #999 1px, transparent 1px) 1px 1px / 3px 3px #4a4a4a;
`;

const LayerCombo = styled(Combo)`
  flex: none;
  width: 300px;
  height: 23px;
  border-color: #555;
  color: #111;
`;

const Divider = styled.span`
  width: 1px;
  height: 18px;
  margin: 0 2px;
  background: #222;
`;

const Workarea = styled.div`
  display: flex;
  flex: 1;
  min-height: 0;
`;

const SideColumn = styled.aside`
  flex: none;
  width: 29px;
  background: #656565;
`;

const DrawBar = styled.div`
  display: flex;
  flex-direction: column;
  width: 25px;
  border: 1px solid #222;
  background: #efefef;

  button {
    width: 23px;
    height: 22px;
  }
`;

const Frame = styled.main`
  display: flex;
  flex-direction: column;
  flex: 1;
  min-width: 0;
  border-top: 2px solid #8c8c8c;
  border-left: 2px solid #9a9a9a;
`;

const Split = styled.div`
  display: flex;
  flex: 1;
  min-height: 0;
`;

const Canvas = styled.div`
  position: relative;
  flex: 1;
  overflow: hidden;
  background: #21282f;
`;

const Drawing = styled.svg`
  position: absolute;
  top: 0;
  left: 0;
`;

const ViewControls = styled.div`
  position: absolute;
  top: 6px;
  left: 3px;
  display: flex;
  font-size: 11px;
  font-weight: 600;
  color: #e0e0e0;
`;

const ViewTools = styled.div`
  position: absolute;
  top: 10px;
  right: 4px;
  display: flex;
  flex-direction: column;
  align-items: flex-end;
`;

const ViewCube = styled.svg`
  display: block;
  margin-right: 7px;
  font-family: "Liberation Sans", Arial, sans-serif;
  font-weight: bold;
`;

const Wcs = styled.button`
  display: flex;
  align-items: center;
  justify-content: space-between;
  width: 48px;
  height: 17px;
  margin: 11px 27px 26px 0;
  padding: 0 6px 0 4px;
  border: 1px solid #a9adba;
  border-radius: 3px;
  font-family: "Liberation Sans", Arial, sans-serif;
  font-size: 11px;
  color: #555963;
  background: #9296a3;

  svg {
    color: #b4b7c0;
  }
`;

const NavBar = styled.div`
  width: 32px;
  height: 212px;
  border-radius: 3px;
  background: #63676b;
`;

const VScroll = styled.div`
  display: flex;
  flex-direction: column;
  align-items: center;
  flex: none;
  width: 18px;
  padding: 7px 0 4px;
  color: #222;
  background: #f0f0ee;
`;

const Space = styled.span`
  flex: ${props => props.$grow || 1};
`;

const Thumb = styled.span`
  flex: none;
  width: 15px;
  height: 15px;
  border: 1px solid #8a8a8a;
  border-radius: 1px;
  background: linear-gradient(90deg, #fafafa, #cfcfcf);
`;

const CommandLine = styled.form`
  position: absolute;
  left: 243px;
  right: 258px;
  bottom: 0;
  display: flex;
  height: 27px;
  border: 1px solid #62666a;
  background: #bcbec0;
`;

const CommandTools = styled.div`
  display: flex;
  align-items: center;
  width: 53px;
  gap: 5px;
  color: #d0d0d0;
  background: linear-gradient(#3b3d40, #54575a);
`;

const CommandInput = styled.input`
  flex: 1;
  min-width: 0;
  padding-left: 2px;
  font-family: "DejaVu Sans Mono", "Liberation Mono", monospace;
  font-style: italic;
  font-size: 12px;
  outline: none;

  &::placeholder {
    color: #6c6c6c;
    opacity: 1;
  }
`;

const PromptButton = styled.button`
  display: flex;
  align-items: center;
  gap: 4px;
  padding: 0 4px;
  color: #555;
`;

const Watermark = styled.div`
  position: absolute;
  left: 600px;
  bottom: 16px;
  z-index: 2;
  display: flex;
  flex-direction: column;
  align-items: center;
  width: 164px;
  pointer-events: none;
`;

const WatermarkSite = styled.span`
  font-family: "Liberation Sans", Arial, sans-serif;
  font-weight: bold;
  font-size: 27px;
  line-height: 25px;
  color: rgba(185, 187, 190, .5);
`;

const LayoutBar = styled.div`
  display: flex;
  align-items: stretch;
  flex: none;
  height: 19px;
  border-bottom: 1px solid #111;
  background: #f0f0f0;
`;

const LayoutNav = styled.button`
  display: flex;
  align-items: center;
  justify-content: center;
  width: 15px;
  color: #555;
  border: 1px solid #c8c8c8;
  border-width: 1px 1px 1px 0;
`;

const LayoutTab = styled.button`
  width: ${props => props.$on ? 52 : 56}px;
  font-size: 11px;
  color: ${props => props.$on ? '#fff' : '#111'};
  background: ${props => props.$on
    ? '#21282f'
    : 'linear-gradient(108deg, #fff calc(100% - 8px), #333 calc(100% - 7px), #f0f0f0 calc(100% - 6px))'};
  clip-path: ${props => props.$on ? 'polygon(0 0, 100% 0, calc(100% - 5px) 100%, 6px 100%)' : 'polygon(0 0, 100% 0, 100% 100%, 0 100%)'};
`;

const HScroll = styled.div`
  display: flex;
  align-items: center;
  width: 465px;
  padding-right: 22px;
  gap: 8px;
  color: #222;
`;

const Splitter = styled.span`
  width: 4px;
  height: 14px;
  border: 1px solid #999;
  border-right: 0;
`;

const StatusBar = styled.footer`
  display: flex;
  align-items: stretch;
  flex: none;
  height: 20px;
  color: #111;
  background: linear-gradient(#777, #8e8e8e);
  font-family: "Liberation Sans Narrow", "Roboto", sans-serif;
`;

const Coordinates = styled.output`
  width: 169px;
  padding: 3px 0 0 13px;
  font-family: "Liberation Sans", Arial, sans-serif;
  font-size: 11px;
`;

const StatusButton = styled.button`
  display: flex;
  align-items: center;
  justify-content: center;
  flex: none;
  gap: 3px;
  width: ${props => props.$w || 22}px;
  padding-top: 1px;
  white-space: nowrap;
  border-left: 1px solid #4c4c4c;
  background: ${props => props.$on ? 'linear-gradient(#e4f6fb, #8ccbdd)' : 'linear-gradient(#c0c0c0, #a4a4a4)'};
`;

const Tray = styled.div`
  display: flex;
  align-items: center;
  width: 48px;
  gap: 4px;
  padding: 0 4px;
  border: 1px solid #333;
  background: #a8a8a8;
`;

/* ---------- drawing contents ---------- */

const GREEN = '#12e82a';
const RED = '#b81c1c';
const GREY = '#80858b';
const YELLOW = '#e8dc4a';

const Footing = ({ x, y }) => (
  <g>
    <path d={ `M${x - 5} ${y + 1.5}h10M${x - 0.5} ${y - 5}v10M${x + 3.5} ${y - 4}v9` } stroke={ YELLOW } strokeWidth=".7" />
    <path d={ `M${x - 4} ${y - 1}h2v-2h3v-1h2v2h2v2h-1v2h-1v2h-3v-1h-3v-1h-1Z` } fill={ GREEN } />
    <path d={ `M${x - 5} ${y + 2}h2v2h-2ZM${x + 3} ${y - 3}h2v2h-2Z` } fill={ GREEN } />
    <path d={ `M${x} ${y - 1.5}h1M${x + 2} ${y + 1}h1M${x - 2} ${y + 2}h1` } stroke="#0a5c18" />
  </g>
);

const gridXs = [523, 527, 542, 548, 568, 580, 600];
const gridYs = [300, 308, 329, 336, 350, 357, 368, 379, 394, 411];
const footings = [
  [549, 309], [568, 308], [580, 308], [549, 321], [549, 351], [542, 357], [568, 368], [580, 368],
  [550, 381], [568, 381], [580, 381], [568, 394], [580, 394], [540, 336], [540, 368],
];
const outline = 'M543.500 297.500H605.500V311.500H603.500V414.500H547.500V385.500H520.500V332.500H522.500V325.500H525.500V314.500H543.500Z';

const FoundationPlan = () => (
  <g fill="none">
    <path d={ gridXs.map(x => `M${x + 0.5} 290V424`).join('') + gridYs.map(y => `M501 ${y + 0.5}H623`).join('') } stroke={ GREY } />
    <path d="M504.500 300V411M506.500 300V411M614.500 300V411M620.500 300V411M523 290.500H600M523 421.500H600M523 423.500H600" stroke={ GREY } />
    <path d="M505 303V411M620 303V411M526 290H600M526 422H600" stroke="#fff" strokeDasharray="2 11" strokeWidth="2" />
    <g stroke="#e01818" strokeWidth="1.300" fill="#7a1616">
      { gridXs.map(x => <path key={ x } d={ `M${x - 1} 285h3v3h-3ZM${x - 1} 425h3v3h-3Z` } />) }
      { gridYs.map(y => <path key={ y } d={ `M497.500 ${y - 1}h3v3h-3ZM623.500 ${y - 1}h3v3h-3Z` } />) }
    </g>
    <path d="M523.500 333V382H549.500V411M529.500 318H541M546 300H599" stroke="#6f7378" strokeWidth="2" />
    <path d="M559.500 301V408M590.500 301V408M535.500 322V380M553 406.500H596" stroke="#d8dadc" />
    <path d="M528 318H541M600.500 300V411.500H549" stroke="#b31818" strokeWidth="2" />
    <path d={ outline } stroke="#8fe800" strokeWidth="2" />
    <path d={ outline } stroke="#e2f03c" strokeWidth=".8" />
    <g stroke={ YELLOW }>
      <path d="M537 330.500H554M537 339.500H554M537 364.500H556M537 372.500H556" strokeDasharray="3 1" />
      <path d="M563 338.500H587M563 355.500H585M565.500 335V358M582.500 336V358M568 318.500H580M568 332.500H580M570.500 315V335M577.500 315V335" strokeDasharray="4 1" />
    </g>
    <g stroke="#20c8e8">
      <path d="M569 341V353M579 341V353" strokeDasharray="3 6" strokeWidth="3" />
      <path d="M573.500 320V331" strokeDasharray="2 3" strokeWidth="2" />
      <path d="M543 368.500H552M543 336.500H550" />
    </g>
    <path d="M529 362H535M553 362H562M586 362H593M560 330V335M573 400V405M583 346V350M578 323V328M561 322H567" stroke={ GREEN } strokeWidth="3" strokeDasharray="2 .5" />
    <path d="M562.500 318.500h3M527 363h2M553 363h2" stroke="#1414d8" strokeWidth="3" />
    { footings.map(([x, y]) => <Footing key={ `${x},${y}` } x={ x } y={ y } />) }
  </g>
);

// Column sections: top is where the shaft starts, measured from the frame
const columns = [
  { x: 702, y: 296, w: 39, top: 6, shaft: '#e0641c' },
  { x: 751, y: 296, w: 39, top: 15, shaft: '#b86a2c' },
  { x: 811, y: 296, w: 38, top: 19, shaft: '#c83a1c', low: true },
  { x: 650, y: 421, w: 39, top: 6, shaft: '#b9962e', cyan: true },
  { x: 712, y: 421, w: 39, top: 6, shaft: '#d42020', cyan: true },
  { x: 764, y: 421, w: 38, top: 14, shaft: '#b8862c', cyan: true },
  { x: 815, y: 421, w: 38, top: 20, shaft: '#c8742c', low: true },
];

const ColumnSection = ({ x, y, w, top, shaft, cyan, low }) => {
  const h = 44 - top;
  return (
    <g transform={ `translate(${x} ${y})` } fill="none">
      <rect x=".5" y=".5" width={ w } height="53" stroke={ RED } strokeWidth="1.200" />
      <path d={ `M6.500 ${top}V44` } stroke={ GREY } />
      <path d={ `M6 ${top + 3}v2M6 ${top + h / 2}v3M6 40v4` } stroke={ GREEN } strokeWidth="2" />
      <path d={ `M18.500 ${top}V46` } stroke={ shaft } strokeWidth="3" />
      <path d={ `M16.500 ${top}V44M20.500 ${top}V44` } stroke="#a8906a" strokeWidth=".6" />
      <path d={ `M14 ${top}.500h9M13 ${top + h * 0.55}h10M13 43.500h10` } stroke="#d06a24" strokeWidth="1.300" />
      <path d="M15 46.500h7M17 48.500h3" stroke="#c06a30" strokeWidth="1.300" />
      { low && <path d="M5 43.500h15M8 41v4M12 41v4" stroke="#f01818" strokeWidth="2" /> }
      <path d={ `M9 ${top + 2}h5M10 ${top + 4}h4M10 ${top + h * 0.35}h5M9 ${top + h * 0.6}h6M9 ${top + h * 0.7}h4` } stroke={ GREEN } strokeWidth="2" />
      <path d={ `M9 ${top + h * 0.56}v4M12 ${top + h * 0.62}v5M10 38v4M13 36v5M15 39v4` } stroke={ GREEN } strokeWidth="2" />
      <path d={ `M22 ${top + h * 0.2}h9M22 ${top + h * 0.5}h8M23 ${top + h * 0.88}h6` } stroke="#38a04a" />
      <path d={ `M24 ${top + h * 0.2 + 0.5}h4M26 ${top + h * 0.5 + 0.5}h5M24 ${top + h * 0.88}h5` } stroke={ GREEN } strokeWidth="2" />
      <path d={ `M${w - 8}.500 ${top}V22l1 7V42` } stroke="#c81818" strokeWidth="1.200" />
      <path d={ `M${w - 7} ${top + 9}v1M${w - 7} 27v2M${w - 7} 36v2M${w - 6} 42v1` } stroke="#ffe88a" strokeWidth="2" />
      { cyan && <path d={ `M20 ${top}h3M20 ${top + h * 0.55}h3M20 41h3` } stroke="#35c8d0" strokeWidth="2" /> }
      <path d={ `M18 ${top + 3}v2M18 ${top + 12}v2M18 ${top + 22}v2` } stroke={ YELLOW } />
    </g>
  );
};

const walls = [
  { x: 933, y: 287, w: 54, h: 55, sx: 22, top: 5, base: 43, a: 9, b: 30, wide: true },
  { x: 935, y: 385, w: 54, h: 51, sx: 20, top: 7, base: 33, a: 11, b: 23 },
  { x: 938, y: 489, w: 60, h: 50, sx: 24, top: 5, base: 34, a: 8, b: 22 },
];

const WallSection = ({ x, y, w, h, sx, top, base, a, b, wide }) => (
  <g transform={ `translate(${x} ${y})` } fill="none">
    <rect x=".5" y=".5" width={ w } height={ h } stroke={ RED } strokeWidth="1.200" />
    <path d={ `M3 ${top + 3}h4M6 ${top + 1}h5M5 ${top + 5}h8M${sx - 8} ${top}v6M10 ${top}v4` } stroke="#c46a2c" strokeWidth="1.300" />
    <path d={ `M5 ${top - 1}h5M11 ${top}h4M8 ${top + 9}h5` } stroke={ GREEN } strokeWidth="1.300" />
    { wide && <path d="M4 22.500h12M7 19v6M10 20v6" stroke="#d8702c" strokeWidth="1.500" /> }
    { wide && <path d="M5 29v5M6 32.500h6M11 20.500h5M7 13.500h5" stroke={ GREEN } /> }
    <path d={ `M6 ${top + 10}v5M7 ${top + 12}v2` } stroke="#ffd080" />
    <rect x={ sx - 4.5 } y={ top + 0.5 } width="5" height="5" stroke="#b8a8b0" />
    <path d={ `M${sx} ${top}h5` } stroke="#cfeaea" strokeWidth="2" />
    <path d={ `M${sx} ${top + 4}V${base + 2}` } stroke={ GREEN } strokeWidth="3" />
    <path d={ `M${sx - 2} ${top + 5}V${base}` } stroke="#b0a89a" />
    <path d={ `M${sx} ${a}.500h26M${sx} ${b}.500h26` } stroke="#2f78b0" strokeWidth="1.300" />
    <path d={ `M${sx} ${a}.500h9M${sx + 14} ${a}.500h5M${sx} ${b}.500h10M${sx + 16} ${b}.500h8` } stroke={ GREEN } strokeWidth="1.600" />
    <path d={ `M${sx + 8}.500 ${a - 2}v5M${sx + 8}.500 ${b - 2}v5` } stroke="#e0e8b0" />
    <path d={ `M${sx - 10} ${base - 0.5}h28` } stroke="#3a88b8" />
    <path d={ `M${sx - 6} ${base + 1}h18v7h-18Z` } stroke="#c8e0b8" />
    <path d={ `M${sx - 4} ${base + 2.5}h15M${sx - 1} ${base + 9.5}h13` } stroke={ GREEN } strokeWidth="2.500" />
    <path d={ `M${sx + 14} ${base - 1.5}h18M${sx + 12} ${base + 1.5}h20M${sx + 18} ${base + 4}h13` } stroke={ GREEN } strokeWidth="2.500" strokeDasharray="5 1 3 .5" />
    <path d={ `M${sx + 14} ${base}h10` } stroke="#e08030" />
    <path d={ `M${sx + 12}.500 ${base - 4}v14` } stroke="#e4e04a" />
    <path d={ `M${sx + 13} ${base + 7}.500h10` } stroke="#3aa0c8" />
  </g>
);

const ModelDrawing = () => (
  <Drawing width="1316" height="461" viewBox="31 226 1316 461" aria-label="Model space">
    <FoundationPlan />
    { columns.map(c => <ColumnSection key={ `${c.x}-${c.y}` } { ...c } />) }
    <rect x="634.500" y="402.500" width="235" height="94" fill="none" stroke={ RED } strokeWidth="1.200" />
    { walls.map(c => <WallSection key={ c.y } { ...c } />) }
    <path d="M328 462h9M330 460v4M333 460v5M335 460v4" stroke="#18d8e8" strokeWidth="2" />
  </Drawing>
);

const Ucs = styled.svg`
  position: absolute;
  left: 8px;
  bottom: 6px;
`;

/* ---------- data ---------- */

const menus = ['File', 'Edit', 'View', 'Insert', 'Format', 'Tools', 'Draw', 'Dimension', 'Modify', 'Parametric', 'Window', 'Help', 'Express'];
const tabs = ['Home', 'Insert', 'Annotate', 'Layout', 'Parametric', 'View', 'Manage', 'Output', 'Plug-ins', 'Autodesk 360', 'Express Tools'];

const drawTools = [
  'line', 'xline', 'pline', 'polygon', 'rect', 'arc', 'circle', 'cloud', 'spline', 'ellipse', 'ellipseArc',
  'insertBlock', 'makeBlock', 'point', 'hatch', 'gradient', 'region', 'table', 'bigA', 'addSelected',
];

const toggles = [
  ['INFER', 37], ['SNAP', 36], ['GRID', 33], ['ORTHO', 45], ['POLAR', 42], ['OSNAP', 43], ['3DOSNAP', 57], ['OTRACK', 50],
  ['DUCS', 36], ['DYN', 29], ['LWT', 30], ['TPY', 27], ['QP', 21], ['SC', 20], ['AM', 22],
];

const modifyCols = [
  { w: 72, items: [['move', 'Move'], ['copy', 'Copy'], ['stretch', 'Stretch']] },
  { w: 69, items: [['rotate', 'Rotate'], ['mirror', 'Mirror'], ['scale', 'Scale']] },
  { w: 66, carets: true, items: [['trim', 'Trim'], ['fillet', 'Fillet'], ['array', 'Array']] },
];

const Big = ({ name, w, caret }) => (
  <BigButton $w={ w }>
    <Svg width="32" height="34" viewBox="0 0 32 34" aria-hidden="true">{ bigGlyphs[name] }</Svg>
    { name }
    { caret && <Caret /> }
  </BigButton>
);

const TitleOf = ({ children, plain, launcher }) => (
  <PanelTitle>
    { launcher && <Space /> }
    { children }
    { !plain && <Caret w={ 8 } /> }
    { launcher && <Space /> }
    { launcher && <Svg width="6" height="6"><path d="M0 0l4 4M5.500 1v4.500H1" stroke="#333" /></Svg> }
  </PanelTitle>
);

const IconBox = ({ names, on, split }) => (
  <Boxed $on={ on } $split={ split }>
    { names.map(name => <button key={ name } aria-label={ name }><Icon name={ name } /></button>) }
    { split && <button aria-label="More"><Caret /></button> }
  </Boxed>
);

const App = () => {
  const [ribbonTab, setRibbonTab] = useState('Home');
  const [active, setActive] = useState(['ORTHO', 'OSNAP', 'OTRACK', 'DYN']);

  const toggle = (name) => {
    setActive(active.includes(name) ? active.filter(n => n !== name) : [...active, name]);
  };

  return (
    <Page>
      <GlobalStyle />

      <Header>
        <AppButton aria-label="Application menu">
          <Svg width="26" height="28" viewBox="0 0 26 28">
            <path d="M12 1L1 26l6-3 5-4Z" fill="#a81c12" />
            <path d="M12 1l6 5 6 20-7-3-5-8Z" fill="#e0422a" />
            <path d="M12 1L4 20q8-4 9-8l3 8 8 6L17 4Z" fill="#c92a1a" />
            <path d="M1 26q10-2 12-12 3 10 11 12-7-6-11-6T1 26Z" fill="#7a120c" />
          </Svg>
          <Caret w={ 7 } />
        </AppButton>

        <TitleBar>
          <Tools $pad={ 4 }>
            <ToolButton aria-label="New"><Icon name="newFile" /></ToolButton>
            <ToolButton aria-label="Open"><Icon name="open" /></ToolButton>
            <ToolButton aria-label="Save"><Icon name="save" /></ToolButton>
            <ToolButton aria-label="Save as"><Icon name="saveAs" /></ToolButton>
            <ToolButton aria-label="Plot"><Icon name="print" /></ToolButton>
            <ToolButton aria-label="Undo"><Icon name="undo" /></ToolButton>
            <ToolButton $w={ 10 } aria-label="Undo list"><Caret /></ToolButton>
            <ToolButton aria-label="Redo"><Icon name="redo" /></ToolButton>
            <ToolButton $w={ 10 } aria-label="Redo list"><Caret /></ToolButton>
          </Tools>
          <Tools>
            <Workspace>
              <Icon name="gear" />
              <BareSelect aria-label="Workspace"><option>Drafting &amp; Annotation</option></BareSelect>
              <Caret w={ 7 } />
            </Workspace>
            <ToolButton $w={ 15 } aria-label="Customize"><Caret w={ 8 } /></ToolButton>
          </Tools>
          <Glass>{ 'Autodesk AutoCAD 2014    سطحي تسليح.dwg' }</Glass>
          <Tools>
            <ToolButton $w={ 12 } aria-label="Collapse search">
              <Svg width="5" height="8" viewBox="0 0 5 8"><path d="M0 0l5 4-5 4Z" fill="#000" /></Svg>
            </ToolButton>
            <Search type="search" aria-label="Search" placeholder="Type a keyword or phrase" />
            <ToolButton aria-label="Find"><Icon name="binoculars" /></ToolButton>
            <ToolButton aria-label="Account"><Icon name="person" /></ToolButton>
            <SignIn>Sign In <Caret /></SignIn>
            <ToolButton $w={ 32 } aria-label="Exchange"><Icon name="exchange" /></ToolButton>
            <ToolButton $w={ 18 } aria-label="Autodesk 360"><Icon name="triangleA" /></ToolButton>
            <ToolButton $w={ 12 } aria-label="Autodesk 360 list"><Caret /></ToolButton>
            <Tools $pad={ 5 } />
            <ToolButton $w={ 28 } aria-label="Help"><Icon name="help" /></ToolButton>
            <ToolButton $w={ 10 } aria-label="Help list"><Caret /></ToolButton>
          </Tools>
          <WindowButtons>
            <WindowButton aria-label="Minimize"><Svg width="12" height="12"><path d="M1 8h10v3H1Z" fill="#fff" /></Svg></WindowButton>
            <WindowButton aria-label="Restore"><Svg width="12" height="12"><path d="M4 1h7v7M1.500 4h7v7h-7Z" stroke="#fff" strokeWidth="1.500" /></Svg></WindowButton>
            <WindowButton $wide aria-label="Close"><Svg width="12" height="12"><path d="M2 2l8 8M10 2l-8 8" stroke="#fff" strokeWidth="2.500" /></Svg></WindowButton>
          </WindowButtons>
        </TitleBar>

        <MenuBar>
          <div>{ menus.map(name => <MenuItem key={ name }>{ name }</MenuItem>) }</div>
          <Tools $gap={ 6 } $pad={ 3 }>
            <button aria-label="Minimize drawing"><Svg width="11" height="12"><path d="M1 9h10v2H1Z" fill="#222" /></Svg></button>
            <button aria-label="Restore drawing"><Svg width="12" height="12"><path d="M4.500 1.500h7v6h-3M1.500 4.500h7v6h-7Z" stroke="#222" strokeWidth="1.500" /></Svg></button>
            <button aria-label="Close drawing"><Svg width="9" height="12"><path d="M1 2l7 8M8 2L1 10" stroke="#222" strokeWidth="2" /></Svg></button>
          </Tools>
        </MenuBar>
      </Header>

      <RibbonTabs>
        { tabs.map(name => (
          <RibbonTab key={ name } $active={ ribbonTab === name } onClick={ () => setRibbonTab(name) }>{ name }</RibbonTab>
        )) }
        <ToolButton $w={ 50 } aria-label="Minimize ribbon">
          <Svg width="24" height="8"><rect width="14" height="7" rx="2" fill="#e4e4e4" /><path d="M4 5h6L7 2Z" fill="#333" /><path d="M19 3h5l-2.500 3Z" fill="#ddd" /></Svg>
        </ToolButton>
      </RibbonTabs>

      <Ribbon>
        <Panel $w={ 226 }>
          <PanelBody>
            <Big name="Line" w={ 38 } />
            <Big name="Polyline" w={ 48 } />
            <Big name="Circle" w={ 52 } caret />
            <Big name="Arc" w={ 40 } caret />
            <Col>
              <IconBox names={ ['rect'] } split />
              <IconBox names={ ['ellipseC'] } split />
              <IconBox names={ ['hatch'] } split />
            </Col>
          </PanelBody>
          <TitleOf>Draw</TitleOf>
        </Panel>

        <Panel $w={ 250 }>
          <PanelBody $left={ 7 }>
            { modifyCols.map(col => (
              <Col key={ col.items[0][0] } $w={ col.w }>
                { col.items.map(([icon, label]) => (
                  <Row key={ label }>
                    <TextButton><Icon name={ icon } />{ label }</TextButton>
                    { col.carets && <CaretButton aria-label={ `${label} options` }><Caret /></CaretButton> }
                  </Row>
                )) }
              </Col>
            )) }
            <Col $end>
              <IconBox names={ ['erase'] } />
              <IconBox names={ ['explode'] } />
              <IconBox names={ ['offset'] } />
            </Col>
          </PanelBody>
          <TitleOf>Modify</TitleOf>
        </Panel>

        <Panel $w={ 214 }>
          <PanelBody $left={ 2 }>
            <Col>
              <Row $gap={ 3 }>
                <IconBox names={ ['layerProps'] } />
                <IconBox names={ ['layerCurrent'] } />
                <IconBox names={ ['layerMatch', 'layerPrev'] } />
                <IconBox names={ ['layerIso', 'layerUniso'] } />
                <IconBox names={ ['layerFreeze', 'layerOff'] } />
              </Row>
              <Row>
                <Combo>
                  <BareSelect aria-label="Layer state"><option>Unsaved Layer State</option></BareSelect>
                  <Caret w={ 8 } />
                </Combo>
              </Row>
              <Row>
                <Combo $gap={ 4 }>
                  <Icon name="bulb" /><Icon name="sun" /><Icon name="unlocked" /><Swatch $color="#00ffff" />
                  <BareSelect aria-label="Layer"><option>BEAM</option></BareSelect>
                  <Caret w={ 8 } />
                </Combo>
              </Row>
            </Col>
          </PanelBody>
          <TitleOf>Layers</TitleOf>
        </Panel>

        <Panel $w={ 127 }>
          <PanelBody $gap={ 7 }>
            <Big name="Text" w={ 40 } caret />
            <Col>
              <Row>
                <TextButton><Icon name="linear" />Linear</TextButton>
                <CaretButton aria-label="Dimensions"><Caret /></CaretButton>
              </Row>
              <Row>
                <TextButton><Icon name="leader" />Leader</TextButton>
                <CaretButton aria-label="Leaders"><Caret /></CaretButton>
              </Row>
              <Row><TextButton><Icon name="table" />Table</TextButton></Row>
            </Col>
          </PanelBody>
          <TitleOf>Annotation</TitleOf>
        </Panel>

        <Panel $w={ 108 }>
          <PanelBody $left={ 2 } $gap={ 3 }>
            <Big name="Insert" w={ 40 } />
            <Col>
              <Row><TextButton><Icon name="createBlock" />Create</TextButton></Row>
              <Row><TextButton><Icon name="editBlock" />Edit</TextButton></Row>
              <Row><IconBox names={ ['attrib'] } split /></Row>
            </Col>
          </PanelBody>
          <TitleOf>Block</TitleOf>
        </Panel>

        <Panel $w={ 162 }>
          <PanelBody>
            <Col>
              <Row $gap={ 3 }>
                <Icon name="wheel" />
                <Combo $gap={ 2 }>
                  <Swatch $size={ 16 } $color="#ff0000" />
                  <BareSelect aria-label="Object color"><option>Red</option></BareSelect>
                  <Caret w={ 8 } />
                </Combo>
              </Row>
              <Row $gap={ 3 }>
                <Icon name="lweight" />
                <Combo $gap={ 2 }>
                  <LineSample />
                  <FixedSelect $w={ 54 } aria-label="Lineweight"><option>0.09 mm</option></FixedSelect>
                  <Caret w={ 8 } />
                </Combo>
              </Row>
              <Row $gap={ 3 }>
                <Icon name="ltype" />
                <Combo $gap={ 2 } $left={ 8 }>
                  <LineSample />
                  <FixedSelect $w={ 54 } aria-label="Linetype"><option>ByBlock</option></FixedSelect>
                  <Caret w={ 8 } />
                </Combo>
              </Row>
            </Col>
          </PanelBody>
          <TitleOf launcher>Properties</TitleOf>
        </Panel>

        <Panel $w={ 69 }>
          <PanelBody $left={ 2 }>
            <Big name="Group" w={ 40 } />
            <Col>
              <Row><IconBox names={ ['ungroup'] } /></Row>
              <Row><IconBox names={ ['groupEdit'] } /></Row>
              <Row><IconBox names={ ['groupSelect'] } on /></Row>
            </Col>
          </PanelBody>
          <TitleOf>Groups</TitleOf>
        </Panel>

        <Panel $w={ 97 }>
          <PanelBody>
            <Big name="Measure" w={ 64 } caret />
            <Col $end>
              <IconBox names={ ['quickSelect'] } />
              <IconBox names={ ['selectSimilar'] } />
              <IconBox names={ ['calc'] } />
            </Col>
          </PanelBody>
          <TitleOf>Utilities</TitleOf>
        </Panel>

        <Panel $w={ 79 }>
          <PanelBody>
            <Big name="Paste" w={ 46 } caret />
            <Col $end>
              <IconBox names={ ['cut'] } />
              <IconBox names={ ['copyClip'] } />
              <IconBox names={ ['matchProp'] } />
            </Col>
          </PanelBody>
          <TitleOf plain>Clipboard</TitleOf>
        </Panel>
      </Ribbon>

      <FileTabs>
        <FileTab $w={ 137 }>{ 'اعمده منسوب  7.8 م*' }</FileTab>
        <FileTab $w={ 129 }>Wall 21-12-2022*</FileTab>
        <FileTab $w={ 130 } $active>
          <span>{ 'سطحي تسليح*' }</span>
          <Svg width="10" height="10" viewBox="0 0 10 10"><path d="M1 1l7 7M8 1L1 8" stroke="#666" strokeWidth="2" /></Svg>
        </FileTab>
        <ToolButton $w={ 26 } aria-label="New tab">
          <Svg width="24" height="17" viewBox="0 0 24 17">
            <path d="M1 1h14q3 0 4.500 3L23 16H9q-3 0-4.500-3Z" fill="#7d7d7d" stroke="#4f4f4f" />
            <circle cx="12" cy="8.500" r="5" fill="#9a9a9a" stroke="#555" />
            <path d="M12 5.500v6M9 8.500h6" stroke="#444" strokeWidth="1.500" />
          </Svg>
        </ToolButton>
      </FileTabs>

      <ToolbarRow>
        <Toolbar>
          <Grip />
          <ToolButton $w={ 23 } aria-label="Layer properties"><Icon name="layerProps" /></ToolButton>
          <LayerCombo $gap={ 1 }>
            <Icon name="bulb" /><Icon name="sun" /><Icon name="vpFreeze" /><Icon name="unlocked" /><Swatch $size={ 11 } $color="#00ffff" />
            <BareSelect aria-label="Current layer"><option>&nbsp;BEAM</option></BareSelect>
            <Caret w={ 8 } />
          </LayerCombo>
          { ['layerCurrent', 'layerPrev', 'layerStates'].map(name => (
            <ToolButton key={ name } $w={ 23 } aria-label={ name }><Icon name={ name } /></ToolButton>
          )) }
        </Toolbar>
        <Toolbar>
          <Grip />
          { ['layerMatch', 'layerCheck', 'layerIso', 'layerUniso', 'layerMerge', 'layerWalk'].map(name => (
            <ToolButton key={ name } $w={ 23 } aria-label={ name }><Icon name={ name } /></ToolButton>
          )) }
          <Divider />
          { ['layerFreeze', 'layerOff', 'layerLock', 'layerUnlock'].map(name => (
            <ToolButton key={ name } $w={ 23 } aria-label={ name }><Icon name={ name } /></ToolButton>
          )) }
        </Toolbar>
      </ToolbarRow>

      <Workarea>
        <SideColumn>
          <DrawBar>
            <Grip $flat />
            { drawTools.map(name => (
              <ToolButton key={ name } aria-label={ name }><Icon name={ name } /></ToolButton>
            )) }
          </DrawBar>
        </SideColumn>

        <Frame>
          <Split>
            <Canvas>
              <ModelDrawing />
              <ViewControls>
                <button>[−]</button><button>[Top]</button><button>[2D Wireframe]</button>
              </ViewControls>

              <Ucs width="76" height="76" viewBox="0 0 76 76" fill="none" stroke="#e8e8e8" shapeRendering="crispEdges">
                <path d="M5.500 19V70M5.500 69.500H56M1.500 65.500h8v8h-8Z" />
                <g shapeRendering="auto"><path d="M7 1l6 6 6-6M13 7v7M60 56l13 12M73 56L60 68" /></g>
              </Ucs>

              <ViewTools>
                <ViewCube width="88" height="90" viewBox="0 0 88 90">
                  <circle cx="44" cy="44" r="35" fill="none" stroke="#444b54" strokeWidth="8" />
                  <rect x="27.500" y="27.500" width="33" height="33" fill="#b4b6b8" stroke="#d4d4d4" />
                  <rect x="34" y="34" width="20" height="20" fill="#a9b2ba" />
                  <g fill="#c8cacc" fontSize="14" textAnchor="middle">
                    <text x="44" y="13">N</text><text x="44" y="86">S</text><text x="8" y="49">W</text><text x="80" y="49">E</text>
                  </g>
                  <text x="44" y="47" fontSize="8" textAnchor="middle" fill="#3c434b">TOP</text>
                </ViewCube>
                <Wcs>WCS <Caret w={ 8 } /></Wcs>
                <NavBar>
                  <Svg width="32" height="212" viewBox="0 0 32 212" stroke="#3a3e43">
                    <circle cx="26" cy="6" r="3.500" /><path d="M24 4l4 4M28 4l-4 4" strokeWidth=".7" />
                    <path d="M5.500 30a10.500 10.500 0 0 1 10.500-10.500h10.500V30a10.500 10.500 0 0 1-21 0Z" />
                    <circle cx="16" cy="30" r="5.500" />
                    <path d="M14 50h5l-2.500 3Z" fill="#3a3e43" stroke="none" />
                    <path d="M2 57.500h28" stroke="#565a5e" />
                    <path d="M11 83Q6 77 4.500 73.500q2-1.500 5 2.500V64q1.500-1 2.500 0l1 7V61.500q1.500-1 2.500 0l.5 9 1.500-8.500q1.500-1 2.500 0l-.5 9 2.500-6q2-.5 2 1l-2.500 9q0 6-3 8.500Z" />
                    <path d="M5 91l15 14M20 91L5 105M4 94v-4h4M17 90h4v4M4 102v4h4" />
                    <circle cx="20.500" cy="104" r="5" fill="#63676b" /><path d="M24 108l4 4" strokeWidth="2.500" />
                    <path d="M14 120h5l-2.500 3Z" fill="#3a3e43" stroke="none" />
                    <path d="M13.500 150V132h-2.500l5-5 4.500 5h-2.500v18ZM12 135q-7 1-7 5 0 4 10 4.500t11-4.500q0-4-6-5M5 143l4 1-1 4" />
                    <path d="M14 158h5l-2.500 3Z" fill="#3a3e43" stroke="none" />
                    <path d="M4.500 169.500h6v6h-6ZM12.500 169.500h6v6h-6ZM20.500 169.500h6v6h-6ZM4.500 179.500h16v12h-16Z" />
                    <path d="M9 181l7 4.500-7 4Z" fill="#3a3e43" stroke="none" />
                    <circle cx="26" cy="206" r="3.500" /><path d="M24.500 205h3l-1.500 1.500Z" fill="#3a3e43" strokeWidth=".5" />
                  </Svg>
                </NavBar>
              </ViewTools>

              <CommandLine onSubmit={ e => e.preventDefault() }>
                <CommandTools>
                  <Grip />
                  <button type="button" aria-label="Close command line"><Icon name="cross" /></button>
                  <button type="button" aria-label="Customize"><Icon name="wrench" /></button>
                </CommandTools>
                <PromptButton type="button" aria-label="Recent commands"><Icon name="prompt" /><Caret w={ 6 } /></PromptButton>
                <CommandInput aria-label="Command" placeholder="Type a command" />
                <PromptButton type="button" aria-label="History">
                  <Svg width="7" height="4" viewBox="0 0 8 5"><path d="M0 5h8L4 0Z" fill="#111" /></Svg>
                </PromptButton>
              </CommandLine>
            </Canvas>

            <VScroll>
              <Svg width="7" height="4" viewBox="0 0 8 5"><path d="M0 5h8L4 0Z" fill="#333" /></Svg>
              <Space $grow={ 307 } />
              <Thumb />
              <Space $grow={ 120 } />
              <Caret w={ 7 } />
            </VScroll>
          </Split>

          <LayoutBar>
            { ['M1 1v8M8 1L3 5l5 4Z', 'M7 1L2 5l5 4Z', 'M3 1l5 4-5 4Z', 'M9 1v8M2 1l5 4-5 4Z'].map(d => (
              <LayoutNav key={ d } aria-label="Layout navigation">
                <Svg width="10" height="10"><path d={ d } fill="#555" stroke="#555" strokeWidth=".6" /></Svg>
              </LayoutNav>
            )) }
            <LayoutTab $on>Model</LayoutTab>
            <LayoutTab>Layout1</LayoutTab>
            <Space />
            <HScroll>
              <Splitter />
              <Svg width="4" height="7"><path d="M4 0v7L0 3.500Z" fill="#222" /></Svg>
              <Thumb />
              <Space />
              <Svg width="4" height="7"><path d="M0 0v7l4-3.500Z" fill="#222" /></Svg>
            </HScroll>
          </LayoutBar>
        </Frame>
      </Workarea>

      <StatusBar>
        <Coordinates>342.451, -125.055, 0.000</Coordinates>
        { toggles.map(([name, w]) => (
          <StatusButton key={ name } $w={ w } $on={ active.includes(name) } onClick={ () => toggle(name) }>{ name }</StatusButton>
        )) }
        <Space />
        <StatusButton $w={ 44 }>MODEL</StatusButton>
        <StatusButton aria-label="Model space"><Icon name="modelSpace" /></StatusButton>
        <StatusButton aria-label="Quick view"><Icon name="quickView" /></StatusButton>
        <Tools $pad={ 6 } />
        <StatusButton $w={ 51 }><Icon name="annoScale" />1:1 <Caret w={ 7 } /></StatusButton>
        <StatusButton aria-label="Annotation visibility"><Icon name="annoVis" /></StatusButton>
        <StatusButton aria-label="Automatic scales"><Icon name="annoAuto" /></StatusButton>
        <Tools $pad={ 3 } />
        <StatusButton aria-label="Workspace switching"><Icon name="gear" /></StatusButton>
        <StatusButton aria-label="Lock toolbars"><Icon name="statusLock" /></StatusButton>
        <StatusButton aria-label="Hardware acceleration"><Icon name="hardware" /></StatusButton>
        <Tray><Icon name="isolate" /><Icon name="bulb" /></Tray>
        <StatusButton $w={ 16 } aria-label="Status bar menu"><Caret w={ 7 } /></StatusButton>
        <StatusButton aria-label="Clean screen"><Icon name="cleanScreen" /></StatusButton>
      </StatusBar>

      <Watermark>
        <Svg width="162" height="50" viewBox="0 0 162 50" stroke="#a8aaad" strokeWidth="8" strokeLinecap="round" opacity=".45">
          <path d="M35 4V30Q34 44 20 44H14Q4 44 4 36Q4 24 20 20M35 32Q38 44 50 44H140M50 42Q44 18 62 18Q78 18 74 42M88 44V32M104 44V32M118 44V32M132 42Q130 18 146 18Q160 18 158 34Q156 44 142 44" />
          <g fill="#a8aaad" stroke="none">
            <circle cx="55" cy="6" r="5" /><circle cx="67" cy="6" r="5" /><circle cx="84" cy="16" r="5" /><circle cx="96" cy="16" r="5" />
          </g>
        </Svg>
        <WatermarkSite>mostaql.com</WatermarkSite>
      </Watermark>
    </Page>
  );
};

export default App;
